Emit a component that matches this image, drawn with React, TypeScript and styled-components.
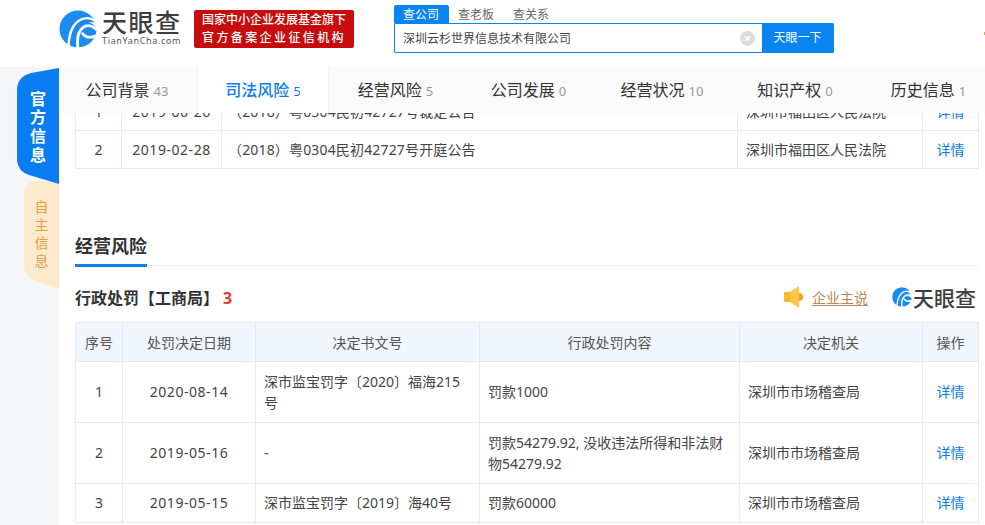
import React from 'react';
import styled, { createGlobalStyle } from 'styled-components';

const GlobalStyle = createGlobalStyle`
  html, body {
    margin: 0;
    padding: 0;
    background: #f5f6f8;
    overflow: hidden;
  }
  body {
    font-family: "Noto Sans", "Noto Sans CJK SC", sans-serif;
    color: #333;
  }
`;

const Page = styled.div`
  width: 985px;
  height: 525px;
  overflow: hidden;
  display: flex;
  flex-direction: column;
`;

const Header = styled.header`
  height: 67px;
  flex: none;
  background: #fff;
  display: flex;
  align-items: flex-start;
  padding: 5px 0 0 59px;
  box-sizing: border-box;
  position: relative;
`;

const LogoBox = styled.div`
  display: flex;
  gap: 5px;
  margin-top: 5px;
  width: 135px;
`;

const LogoWords = styled.div`
  display: flex;
  flex-direction: column;
  width: 82px;
`;

const LogoName = styled.div`
  font-size: 25px;
  line-height: 25px;
  font-weight: 500;
  color: #3d3d3d;
  letter-spacing: 1.5px;
  white-space: nowrap;
`;

const LogoSub = styled.div`
  font-size: 9px;
  line-height: 12px;
  color: #555;
  letter-spacing: 0.65px;
  white-space: nowrap;
`;

const RedBadge = styled.div`
  width: 160px;
  height: 38px;
  margin-top: 5px;
  background: #c60c0c;
  border-radius: 2px;
  color: #fff;
  font-size: 12px;
  font-weight: 500;
  line-height: 18px;
  text-align: center;
  padding-top: 1px;
  box-sizing: border-box;
`;

const BadgeLine = styled.div<{ $spacing?: number }>`
  letter-spacing: ${p => p.$spacing ?? 0}px;
  white-space: nowrap;
`;

const SearchBox = styled.div`
  margin-left: 40px;
  width: 440px;
`;

const SearchTabs = styled.div`
  display: flex;
  height: 18px;
  font-size: 12px;
  line-height: 19px;
`;

const SearchTab = styled.div<{ $active?: boolean }>`
  width: 55px;
  padding-left: 9px;
  box-sizing: border-box;
  color: ${p => (p.$active ? '#fff' : '#666')};
  background: ${p => (p.$active ? '#0a84f0' : 'transparent')};
  border-radius: 2px 2px 0 0;
`;

const SearchRow = styled.div`
  display: flex;
  height: 30px;
  border: 1px solid #0a84f0;
  box-sizing: border-box;
  border-radius: 1px;
`;

const SearchInput = styled.div`
  flex: 1;
  display: flex;
  align-items: center;
  justify-content: space-between;
  padding: 0 7px 0 8px;
  font-size: 12px;
  color: #444;
  background: #fff;
`;

const ClearIcon = styled.span`
  width: 15px;
  height: 15px;
  border-radius: 50%;
  background: #dcdcdc;
  color: #fff;
  font-size: 13px;
  line-height: 15px;
  text-align: center;
  font-weight: 700;
`;

const SearchButton = styled.div`
  width: 71px;
  background: #0a84f0;
  color: #fff;
  font-size: 12px;
  line-height: 28px;
  text-align: center;
`;

const EdgeMark = styled.span`
  position: absolute;
  right: 0;
  top: 32px;
  width: 1px;
  height: 3px;
  background: #e8a04a;
`;

const Body = styled.div`
  flex: 1;
  min-height: 0;
  display: flex;
`;

const SideRail = styled.div`
  width: 59px;
  flex: none;
  display: flex;
  flex-direction: column;
  align-items: flex-end;
  padding-top: 1px;
  box-sizing: border-box;
`;

const SideTab = styled.div<{ $active?: boolean }>`
  position: relative;
  z-index: ${p => (p.$active ? 1 : 0)};
  width: ${p => (p.$active ? '42px' : '35px')};
  height: ${p => (p.$active ? '116px' : '112px')};
  margin-top: ${p => (p.$active ? '0' : '-5px')};
  padding: ${p => (p.$active ? '2px 0 0' : '0 0 2px')};
  box-sizing: border-box;
  background: ${p => (p.$active ? '#0a7df2' : '#fde9cb')};
  color: ${p => (p.$active ? '#fff' : '#e2a043')};
  font-size: ${p => (p.$active ? '16px' : '14px')};
  font-weight: ${p => (p.$active ? 700 : 400)};
  line-height: ${p => (p.$active ? '18.7px' : '18px')};
  text-align: center;
  display: flex;
  flex-direction: column;
  justify-content: center;
  clip-path: ${p =>
    p.$active
      ? 'path("M42 0 L14 5 Q0 9 0 22 L0 90 Q0 103 12 107 L42 116 Z")'
      : 'path("M12 2 Q0 3 0 16 L0 86 Q0 98 14 103 L35 110 L35 2 Z")'};
`;

const Main = styled.main`
  flex: 1;
  min-width: 0;
  background: #fff;
  position: relative;
  overflow: hidden;
`;

const TabBar = styled.nav`
  position: absolute;
  top: 0;
  left: 0;
  right: 0;
  height: 46px;
  background: #fff;
  display: flex;
  z-index: 2;
`;

const Tab = styled.div<{ $active?: boolean; $width: number }>`
  width: ${p => p.$width}px;
  flex: none;
  box-sizing: border-box;
  background: ${p => (p.$active ? '#fff' : '#fafafa')};
  border-right: 1px solid ${p => (p.$active ? '#eef0f2' : 'transparent')};
  border-left: 1px solid ${p => (p.$active ? '#eef0f2' : 'transparent')};
  color: ${p => (p.$active ? '#0a7df2' : '#333')};
  font-size: 16px;
  font-weight: ${p => (p.$active ? 500 : 400)};
  line-height: 46px;
  text-align: center;
  white-space: nowrap;

  &:first-child {
    padding-right: 2px;
  }
`;

const TabCount = styled.span<{ $active?: boolean }>`
  font-size: 13px;
  font-weight: 400;
  color: ${p => (p.$active ? '#0a7df2' : '#999')};
  margin-left: 4px;
`;

const Content = styled.div`
  padding: 25px 6px 0 16px;
`;

const Table = styled.table`
  width: 903px;
  border-collapse: collapse;
  table-layout: fixed;
  font-size: 14px;
  color: #444;
`;

const Th = styled.th`
  height: 37px;
  padding: 0 0 1px;
  background: #f0f6fc;
  border: 1px solid #e3ebf2;
  font-size: 14px;
  font-weight: 400;
  color: #555;
  text-align: center;
`;

const Td = styled.td<{ $left?: boolean }>`
  padding: 0 8px 1px;
  border: 1px solid #e3ebf2;
  line-height: 21px;
  text-align: ${p => (p.$left ? 'left' : 'center')};
`;

const Row = styled.tr<{ $height: number }>`
  height: ${p => p.$height}px;
`;

const DateText = styled.span`
  letter-spacing: 0.55px;
  white-space: nowrap;
`;

const CaseText = styled.span`
  margin-left: -2px;
  letter-spacing: 0.16px;
  white-space: nowrap;
`;

const Link = styled.a`
  color: #0a7df2;
  cursor: pointer;
`;

const SectionTitle = styled.div`
  margin-top: 56px;
  height: 40px;
  border-bottom: 1px solid #e8eef3;
  width: 903px;
`;

const SectionText = styled.h2`
  display: inline-block;
  margin: 0;
  height: 42px;
  padding-top: 6px;
  box-sizing: border-box;
  border-bottom: 3px solid #0a84f0;
  font-size: 18px;
  line-height: 30px;
  font-weight: 700;
  color: #333;
`;

const SubRow = styled.div`
  display: flex;
  align-items: center;
  width: 903px;
  height: 56px;
  padding-top: 6px;
  box-sizing: border-box;
`;

const SubTitle = styled.h3`
  margin: 0;
  font-size: 16px;
  font-weight: 700;
  color: #333;
  flex: 1;
`;

const RedCount = styled.span`
  color: #e03c31;
  margin-left: 4px;
`;

const OwnerLink = styled.span`
  font-size: 14px;
  color: #b98a4f;
  text-decoration: underline;
  text-underline-offset: 2px;
  margin: 0 24px 0 8px;
`;

const MiniLogo = styled.div`
  display: flex;
  align-items: center;
  gap: 1px;
  font-size: 21px;
  font-weight: 500;
  color: #3d3d3d;
  margin-right: 2px;
`;

const BrandMark = ({ size }: { size: number }) => (
  <svg width={size} height={size} viewBox="0 0 40 40" style={{ flex: 'none' }}>
    <circle cx="20" cy="20" r="19.5" fill="#1a8cf0" />
    <path d="M40 13 C28 3 11 10 10 38" fill="none" stroke="#fff" strokeWidth="2.6" />
    <path d="M40 21 C30 11 17 18 20 40" fill="none" stroke="#fff" strokeWidth="3" />
    <path d="M24 24 C28 29 33 30 39 27" fill="none" stroke="#fff" strokeWidth="3" />
    <path d="M31 13 C35 14 38 17 40 20 L40 13 Z" fill="#fff" />
  </svg>
);

const Speaker = () => (
  <svg width="20" height="22" viewBox="0 0 20 22">
    <rect x="0" y="6" width="6" height="10" fill="#fbb62f" />
    <path d="M6 6 L15 0 L15 22 L6 16 Z" fill="#fcc64a" />
    <path d="M15 7 A4 4 0 0 1 15 15 Z" fill="#f5a31f" />
  </svg>
);

const tabs: { label: string; count: number; width: number; active?: boolean }[] = [
  { label: '公司背景', count: 43, width: 138 },
  { label: '司法风险', count: 5, width: 132, active: true },
  { label: '经营风险', count: 5, width: 133 },
  { label: '公司发展', count: 0, width: 133 },
  { label: '经营状况', count: 10, width: 134 },
  { label: '知识产权', count: 0, width: 132 },
  { label: '历史信息', count: 1, width: 135 },
];

const penalties = [
  { no: 1, date: '2020-08-14', doc: '深市监宝罚字〔2020〕福海215号', content: '罚款1000', org: '深圳市市场稽查局', h: 61 },
  { no: 2, date: '2019-05-16', doc: '-', content: '罚款54279.92, 没收违法所得和非法财物54279.92', org: '深圳市市场稽查局', h: 61 },
  { no: 3, date: '2019-05-15', doc: '深市监宝罚字〔2019〕海40号', content: '罚款60000', org: '深圳市市场稽查局', h: 39 },
];

export default function App() {
  return (
    <Page>
      <GlobalStyle />
      <Header>
        <LogoBox>
          <BrandMark size={38} />
          <LogoWords>
            <LogoName>天眼查</LogoName>
            <LogoSub>TianYanCha.com</LogoSub>
          </LogoWords>
        </LogoBox>
        <RedBadge>
          <BadgeLine>国家中小企业发展基金旗下</BadgeLine>
          <BadgeLine $spacing={2.4}>官方备案企业征信机构</BadgeLine>
        </RedBadge>
        <SearchBox>
          <SearchTabs>
            <SearchTab $active>查公司</SearchTab>
            <SearchTab>查老板</SearchTab>
            <SearchTab>查关系</SearchTab>
          </SearchTabs>
          <SearchRow>
            <SearchInput>
              深圳云杉世界信息技术有限公司
              <ClearIcon>×</ClearIcon>
            </SearchInput>
            <SearchButton>天眼一下</SearchButton>
          </SearchRow>
        </SearchBox>
        <EdgeMark />
      </Header>
      <Body>
        <SideRail>
          <SideTab $active>
            <span>官</span><span>方</span><span>信</span><span>息</span>
          </SideTab>
          <SideTab>
            <span>自</span><span>主</span><span>信</span><span>息</span>
          </SideTab>
        </SideRail>
        <Main>
          <TabBar>
            {tabs.map(t => (
              <Tab key={t.label} $active={t.active} $width={t.width}>
                {t.label}
                <TabCount $active={t.active}>{t.count}</TabCount>
              </Tab>
            ))}
          </TabBar>
          <Content>
            <Table>
              <colgroup>
                <col width={46} />
                <col width={100} />
                <col width={516} />
                <col width={185} />
                <col width={56} />
              </colgroup>
              <tbody>
                <Row $height={38}>
                  <Td>1</Td>
                  <Td><DateText>2019-06-26</DateText></Td>
                  <Td $left><CaseText>（2018）粤0304民初42727号裁定公告</CaseText></Td>
                  <Td $left>深圳市福田区人民法院</Td>
                  <Td><Link>详情</Link></Td>
                </Row>
                <Row $height={38}>
                  <Td>2</Td>
                  <Td><DateText>2019-02-28</DateText></Td>
                  <Td $left><CaseText>（2018）粤0304民初42727号开庭公告</CaseText></Td>
                  <Td $left>深圳市福田区人民法院</Td>
                  <Td><Link>详情</Link></Td>
                </Row>
              </tbody>
            </Table>
            <SectionTitle>
              <SectionText>经营风险</SectionText>
            </SectionTitle>
            <SubRow>
              <SubTitle>
                行政处罚【工商局】<RedCount>3</RedCount>
              </SubTitle>
              <Speaker />
              <OwnerLink>企业主说</OwnerLink>
              <MiniLogo>
                <BrandMark size={20} />
                天眼查
              </MiniLogo>
            </SubRow>
            <Table>
              <colgroup>
                <col width={47} />
                <col width={133} />
                <col width={224} />
                <col width={260} />
                <col width={183} />
                <col width={56} />
              </colgroup>
              <thead>
                <tr>
                  <Th>序号</Th>
                  <Th>处罚决定日期</Th>
                  <Th>决定书文号</Th>
                  <Th>行政处罚内容</Th>
                  <Th>决定机关</Th>
                  <Th>操作</Th>
                </tr>
              </thead>
              <tbody>
                {penalties.map(p => (
                  <Row key={p.no} $height={p.h}>
                    <Td>{p.no}</Td>
                    <Td><DateText>{p.date}</DateText></Td>
                    <Td $left>{p.doc}</Td>
                    <Td $left>{p.content}</Td>
                    <Td $left>{p.org}</Td>
                    <Td><Link>详情</Link></Td>
                  </Row>
                ))}
              </tbody>
            </Table>
          </Content>
        </Main>
      </Body>
    </Page>
  );
}
